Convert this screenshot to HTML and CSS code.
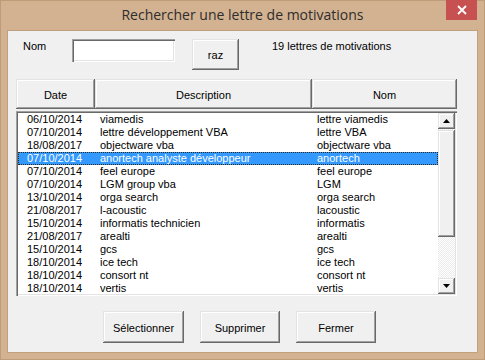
FILE: index.html
```html
<!DOCTYPE html>
<html lang="fr">
<head>
<meta charset="utf-8">
<title>Rechercher une lettre de motivations</title>
<link rel="stylesheet" href="styles.css">
</head>
<body>
<div class="window">
  <div class="titlebar">
    <span class="spacer"></span>
    <div class="title">Rechercher une lettre de motivations</div>
    <div class="close"><svg width="10" height="10" viewBox="0 0 10 10"><path d="M1 1 L9 9 M9 1 L1 9" stroke="#fff" stroke-width="1.8" fill="none"/></svg></div>
  </div>
  <div class="client">
    <div class="toprow">
      <label class="lbl-nom">Nom</label>
      <div class="input"></div>
      <div class="btn btn-raz">raz</div>
      <div class="count">19 lettres de motivations</div>
    </div>
    <div class="header">
      <div class="hcell">Date</div>
      <div class="hcell">Description</div>
      <div class="hcell">Nom</div>
    </div>
    <div class="listbox">
      <div class="rows">
        <div class="row"><span>06/10/2014</span><span>viamedis</span><span>lettre viamedis</span></div>
        <div class="row"><span>07/10/2014</span><span>lettre développement VBA</span><span>lettre VBA</span></div>
        <div class="row"><span>18/08/2017</span><span>objectware vba</span><span>objectware vba</span></div>
        <div class="row selected"><span>07/10/2014</span><span>anortech analyste développeur</span><span>anortech</span></div>
        <div class="row"><span>07/10/2014</span><span>feel europe</span><span>feel europe</span></div>
        <div class="row"><span>07/10/2014</span><span>LGM group vba</span><span>LGM</span></div>
        <div class="row"><span>13/10/2014</span><span>orga search</span><span>orga search</span></div>
        <div class="row"><span>21/08/2017</span><span>l-acoustic</span><span>lacoustic</span></div>
        <div class="row"><span>15/10/2014</span><span>informatis technicien</span><span>informatis</span></div>
        <div class="row"><span>21/08/2017</span><span>arealti</span><span>arealti</span></div>
        <div class="row"><span>15/10/2014</span><span>gcs</span><span>gcs</span></div>
        <div class="row"><span>18/10/2014</span><span>ice tech</span><span>ice tech</span></div>
        <div class="row"><span>18/10/2014</span><span>consort nt</span><span>consort nt</span></div>
        <div class="row"><span>18/10/2014</span><span>vertis</span><span>vertis</span></div>
      </div>
      <div class="scrollbar">
        <div class="sb-btn"><svg width="7" height="4" viewBox="0 0 7 4"><path d="M3.5 0 L7 4 L0 4 Z" fill="#000"/></svg></div>
        <div class="sb-track">
          <div class="sb-thumb"></div>
        </div>
        <div class="sb-btn"><svg width="7" height="4" viewBox="0 0 7 4"><path d="M0 0 L7 0 L3.5 4 Z" fill="#000"/></svg></div>
      </div>
    </div>
    <div class="actions">
      <div class="btn btn-action">Sélectionner</div>
      <div class="btn btn-action">Supprimer</div>
      <div class="btn btn-action">Fermer</div>
    </div>
  </div>
</div>
</body>
</html>
```

FILE: styles.css
```css
* { box-sizing: border-box; }
html, body { margin: 0; padding: 0; }
body {
  width: 485px;
  height: 360px;
  background: #d3b291;
  font-family: "Liberation Sans", Arial, sans-serif;
  font-size: 11px;
  color: #000;
  overflow: hidden;
}
.window {
  width: 485px;
  height: 360px;
  background: #d3b291;
  border: 1px solid #bf9c78;
  display: flex;
  flex-direction: column;
}
.titlebar {
  height: 30px;
  display: grid;
  grid-template-columns: 1fr auto 1fr;
  align-items: start;
}
.title {
  font-family: "Open Sans", "Noto Sans", sans-serif;
  font-size: 14px;
  line-height: 20px;
  margin-top: 4px;
  color: #2d2d2d;
  white-space: nowrap;
}
.close {
  justify-self: end;
  margin-right: 7px;
  margin-top: -1px;
  width: 31px;
  height: 20px;
  background: #c75050;
  display: flex;
  align-items: center;
  justify-content: center;
}
.client {
  margin: 0 7px;
  height: 321px;
  background: #f0f0f0;
  box-shadow: 0 0 0 1px #c1a07e;
  padding: 8px 0 0 8px;
}
.toprow {
  display: flex;
  align-items: flex-start;
  height: 31px;
}
.lbl-nom {
  width: 56px;
  padding-left: 7px;
  margin-top: 1px;
  line-height: 13px;
}
.input {
  width: 103px;
  height: 23px;
  background: #fff;
  box-shadow: inset 1px 1px #a0a0a0, inset 2px 2px #696969, inset -1px -1px #fff, inset -2px -2px #e3e3e3;
}
.btn {
  background: #f0f0f0;
  display: flex;
  align-items: center;
  justify-content: center;
  box-shadow: inset -1px -1px #696969, inset 1px 1px #e3e3e3, inset -2px -2px #a0a0a0, inset 2px 2px #fff;
}
.btn-raz {
  margin-left: 17px;
  width: 47px;
  height: 31px;
  padding-top: 1px;
}
.count {
  margin-left: 33px;
  margin-top: 1px;
  line-height: 13px;
}
.header {
  margin-top: 9px;
  width: 441px;
  height: 30px;
  display: grid;
  grid-template-columns: 79px 217px 1fr;
}
.hcell {
  display: flex;
  align-items: center;
  justify-content: center;
  background: #f0f0f0;
  box-shadow: inset -1px -1px #696969, inset 1px 1px #e3e3e3, inset -2px -2px #a0a0a0, inset 2px 2px #fff;
  padding-top: 1px;
}
.listbox {
  margin-top: 2px;
  width: 441px;
  height: 185px;
  background: #fff;
  padding: 2px 2px 2px 2px;
  box-shadow: inset 1px 1px #a0a0a0, inset 2px 2px #696969, inset -1px -1px #fff, inset -2px -2px #e3e3e3;
  display: flex;
}
.rows {
  flex: 1;
  overflow: hidden;
}
.row {
  height: 13px;
  line-height: 13px;
  display: grid;
  grid-template-columns: 82px 217px 1fr;
  white-space: nowrap;
}
.row span:first-child { padding-left: 9px; }
.row.selected {
  background: #3399ff;
  color: #fff;
  outline: 1px dotted #2a2a1a;
  outline-offset: -1px;
}
.scrollbar {
  width: 17px;
  display: flex;
  flex-direction: column;
}
.sb-btn {
  height: 16px;
  background: #f0f0f0;
  display: flex;
  align-items: center;
  justify-content: center;
  box-shadow: inset -1px -1px #696969, inset 1px 1px #e3e3e3, inset -2px -2px #a0a0a0, inset 2px 2px #fff;
}
.sb-track {
  flex: 1;
  background: repeating-conic-gradient(#ffffff 0 25%, #ebebeb 0 50%) 0 0 / 2px 2px;
  padding-top: 1px;
}
.sb-thumb {
  height: 107px;
  background: #f0f0f0;
  box-shadow: inset -1px -1px #696969, inset 1px 1px #e3e3e3, inset -2px -2px #a0a0a0, inset 2px 2px #fff;
}
.actions {
  margin-top: 15px;
  padding-left: 87px;
  display: flex;
  gap: 16px;
}
.btn-action {
  width: 81px;
  height: 32px;
  padding-top: 1px;
}
.btn-action + .btn-action { width: 80px; }
```
